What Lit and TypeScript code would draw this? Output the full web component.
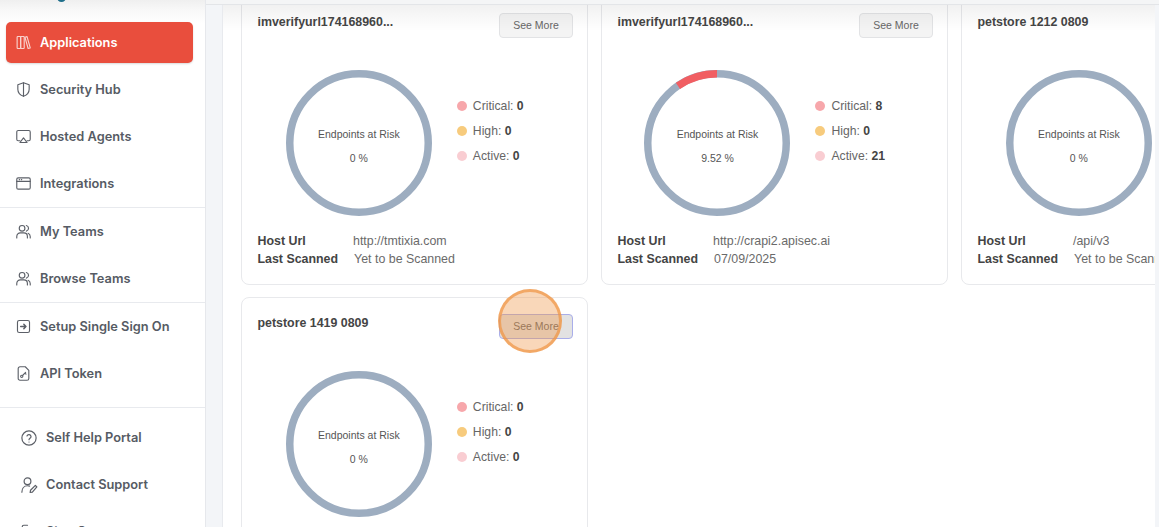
import { LitElement, html, css, svg } from "lit";
import { customElement } from "lit/decorators.js";

const I = (body: unknown, size = 17) => html`<svg class="ic" width=${size} height=${size} viewBox="0 0 24 24" fill="none" stroke="currentColor" stroke-width="1.6" stroke-linecap="round" stroke-linejoin="round">${body}</svg>`;

const icons: Record<string, unknown> = {
  books: svg`<rect x="3" y="3.5" width="5" height="17" rx="1"/><rect x="8" y="3.5" width="5" height="17" rx="1"/><path d="M14 4.5l3-.8 4.5 16-3 .8z"/>`,
  shield: svg`<path d="M12 2.500l8 2.800v6.200c0 4.800-3.400 8.300-8 10-4.600-1.700-8-5.200-8-10V5.300z"/><path d="M12 2.500v19"/>`,
  agent: svg`<path d="M7 18H4.500A2 2 0 0 1 2.500 16V5.500a2 2 0 0 1 2-2h15a2 2 0 0 1 2 2V16a2 2 0 0 1-2 2H17"/><path d="M12 14l5 6.500H7z"/>`,
  window: svg`<rect x="2.500" y="4" width="19" height="16" rx="2"/><path d="M2.500 9h19M6 6.500h.5M9 6.500h.5"/>`,
  users: svg`<circle cx="10" cy="7.500" r="4"/><path d="M2.500 21v-2a5 5 0 0 1 5-5h5a5 5 0 0 1 5 5v2"/><path d="M16 3.600a4 4 0 0 1 0 7.800M21.500 21v-2a5 5 0 0 0-3-4.500"/>`,
  sso: svg`<rect x="3.500" y="3.500" width="17" height="17" rx="2.500"/><path d="M8 12h7.500M12.500 9l3 3-3 3" stroke-width="2"/>`,
  token: svg`<path d="M14.500 2.500H7a2.500 2.500 0 0 0-2.500 2.500v14A2.500 2.500 0 0 0 7 21.500h10a2.500 2.500 0 0 0 2.500-2.500V7.500z"/><circle cx="9.500" cy="16" r="1.600"/><path d="M11 14.500l4-4M14 11.500l1.500 1.500"/>`,
  help: svg`<circle cx="12" cy="12" r="9.500"/><path d="M9.300 9.300a2.800 2.800 0 0 1 5.400.9c0 1.800-2.700 2.300-2.700 4"/><path d="M12 17.300h.01"/>`,
  contact: svg`<circle cx="10" cy="7" r="4.500"/><path d="M2.500 21.500c0-5 3-8.500 7.500-8.500 1 0 2 .2 2.800.5"/><path d="M20.500 12.500l2 2-6 7-3 .5.500-3z"/>`,
  signout: svg`<path d="M10 3H5a2 2 0 0 0-2 2v14a2 2 0 0 0 2 2h5M15 8l5 4-5 4M20 12H9"/>`,
};

interface Nav { label: string; icon: string; active?: boolean; }
const group1: Nav[] = [
  { label: "Applications", icon: "books", active: true },
  { label: "Security Hub", icon: "shield" },
  { label: "Hosted Agents", icon: "agent" },
  { label: "Integrations", icon: "window" },
];
const group2: Nav[] = [
  { label: "My Teams", icon: "users" },
  { label: "Browse Teams", icon: "users" },
];
const group3: Nav[] = [
  { label: "Setup Single Sign On", icon: "sso" },
  { label: "API Token", icon: "token" },
];
const group4: Nav[] = [
  { label: "Self Help Portal", icon: "help" },
  { label: "Contact Support", icon: "contact" },
  { label: "Sign Out", icon: "signout" },
];

interface Card {
  title: string; critical: number; high: number; active: number; pct: string; risk: number;
  host: string; scanned: string; more?: boolean; focus?: boolean;
}
const cards: Card[] = [
  { title: "imverifyurl174168960...", critical: 0, high: 0, active: 0, pct: "0 %", risk: 0, host: "http://tmtixia.com", scanned: "Yet to be Scanned", more: true },
  { title: "imverifyurl174168960...", critical: 8, high: 0, active: 21, pct: "9.52 %", risk: 9.52, host: "http://crapi2.apisec.ai", scanned: "07/09/2025", more: true },
  { title: "petstore 1212 0809", critical: 0, high: 0, active: 0, pct: "0 %", risk: 0, host: "/api/v3", scanned: "Yet to be Scanned" },
  { title: "petstore 1419 0809", critical: 0, high: 0, active: 0, pct: "0 %", risk: 0, host: "http://tmtixia.com", scanned: "Yet to be Scanned", more: true, focus: true },
];

@customElement("app-root")
export class AppRoot extends LitElement {
  static styles = css`
    :host { display: block; width: 1159px; height: 527px; overflow: hidden; font-family: "Liberation Sans", Arial, sans-serif; background: #fff; }
    * { box-sizing: border-box; }
    .app { display: flex; height: 527px; }
    .side { position: relative; flex: none; width: 206px; height: 527px; overflow: hidden; border-right: 1px solid #e6e8ec; padding-top: 18px; background: linear-gradient(#efefef 0, #f8f8f8 10px, #fff 24px); }
    .logo { position: absolute; left: 57px; top: -4px; width: 9px; height: 6px; border-radius: 0 0 5px 5px; background: #1f6f8b; }
    .group { display: flex; flex-direction: column; }
    .sep { border-bottom: 1px solid #e8eaee; }
    .item { display: flex; align-items: center; gap: 8px; height: 47px; padding-left: 15px; color: #565b64; font-family: Inter, "Liberation Sans", sans-serif; font-size: 12.8px; font-weight: 600; white-space: nowrap; }
    .item.active { height: 41px; margin: 4px 12px 3px 6px; padding-left: 9px; border-radius: 5px; background: #e94e3d; color: #fff; box-shadow: 0 1px 2px rgba(0,0,0,.15); }
    .g3 { padding-bottom: 10px; }
    .g4 { padding-top: 6px; }
    .g4 .item { padding-left: 20px; gap: 8px; }
    .ic { flex: none; color: #5c6068; }
    .item.active .ic { color: #fff; opacity: .75; }
    .main { flex: 1; display: flex; flex-direction: column; min-width: 0; background: #f3f5f8; }
    .top { flex: none; height: 5px; background: #f4f5f6; border-bottom: 1px solid #e3e5e8; }
    .body { position: relative; flex: 1; margin: 0 4px 0 16px; padding-left: 18px; overflow: hidden; background: #fff; border-left: 1px solid #e8eaee; }
    .body::after { content: ""; position: absolute; inset: 0 0 auto 0; height: 26px; background: linear-gradient(rgba(0,0,0,.055), rgba(0,0,0,0)); pointer-events: none; }
    .grid { display: grid; grid-template-columns: repeat(3, 347px); column-gap: 13px; row-gap: 12px; margin-top: -9px; width: 1200px; }
    .card { height: 289px; padding: 17px 14px 0 15.500px; border: 1px solid #e8e9ec; border-radius: 8px; background: #fff; display: flex; flex-direction: column; }
    .head { display: flex; justify-content: space-between; align-items: flex-start; height: 56px; }
    .title { font-size: 12.4px; font-weight: 700; color: #454545; line-height: 16px; white-space: nowrap; }
    .btn { position: relative; width: 74px; height: 25px; margin-top: -1px; padding-bottom: 2px; border: 1px solid #e2e3e5; border-radius: 4px; background: #f4f4f4; color: #666; font-size: 10.5px; display: flex; align-items: center; justify-content: center; }
    .btn.focus { background: #e2e2e2; border-color: #a9aeea; }
    .pulse { position: absolute; left: -2px; top: -26px; width: 64px; height: 64px; border-radius: 50%; background: rgba(240,150,70,.38); border: 3px solid rgba(240,150,70,.72); }
    .chart { display: flex; align-items: center; justify-content: center; gap: 25px; padding-right: 21px; height: 146px; flex: none; }
    .ring { position: relative; flex: none; width: 146px; height: 146px; }
    .ring svg { display: block; }
    .center { position: absolute; inset: 0; display: flex; flex-direction: column; align-items: center; justify-content: center; gap: 12px; padding-top: 6px; color: #555; font-size: 10.5px; line-height: 12px; }
    .legend { display: flex; flex-direction: column; gap: 7px; margin-top: -24px; }
    .row { display: flex; align-items: center; gap: 6px; height: 18px; font-size: 12.2px; color: #666; white-space: nowrap; }
    .row b { color: #444; }
    .dot { width: 10px; height: 10px; border-radius: 50%; flex: none; }
    .meta { margin-top: 16px; font-size: 12.4px; line-height: 18px; color: #6a6a6a; white-space: nowrap; }
    .meta b { color: #444; }
    .m1 { display: grid; grid-template-columns: 95.500px auto; }
    .m2 { display: flex; gap: 16px; }
  `;

  private nav(n: Nav, size = 17) {
    return html`<div class="item ${n.active ? "active" : ""}">${I(icons[n.icon], size)}<span>${n.label}</span></div>`;
  }

  private ring(c: Card) {
    const r = 69.25, len = 2 * Math.PI * r, seg = (len * c.risk) / 100;
    return html`<div class="ring">
      <svg width="146" height="146" viewBox="0 0 146 146">
        <circle cx="73" cy="73" r=${r} fill="none" stroke="#9dadc0" stroke-width="7.500"/>
        ${c.risk > 0 ? svg`<circle cx="73" cy="73" r=${r} fill="none" stroke="#f15e62" stroke-width="7.500" stroke-dasharray="${seg} ${len - seg}" transform="rotate(-90 73 73) scale(1 -1) translate(0 -146)"/>` : ""}
      </svg>
      <div class="center"><span>Endpoints at Risk</span><span>${c.pct}</span></div>
    </div>`;
  }

  private card(c: Card) {
    return html`<div class="card">
      <div class="head">
        <div class="title">${c.title}</div>
        ${c.more ? html`<div class="btn ${c.focus ? "focus" : ""}">See More${c.focus ? html`<span class="pulse"></span>` : ""}</div>` : ""}
      </div>
      <div class="chart">
        ${this.ring(c)}
        <div class="legend">
          <div class="row"><span class="dot" style="background:#f7a7ab"></span><span>Critical: <b>${c.critical}</b></span></div>
          <div class="row"><span class="dot" style="background:#f7cb7d"></span><span>High: <b>${c.high}</b></span></div>
          <div class="row"><span class="dot" style="background:#f9cdd2"></span><span>Active: <b>${c.active}</b></span></div>
        </div>
      </div>
      <div class="meta">
        <div class="m1"><b>Host Url</b><span>${c.host}</span></div>
        <div class="m2"><b>Last Scanned</b><span>${c.scanned}</span></div>
      </div>
    </div>`;
  }

  render() {
    return html`<div class="app">
      <aside class="side">
        <div class="logo"></div>
        <div class="group sep">${group1.map((n) => this.nav(n))}</div>
        <div class="group sep">${group2.map((n) => this.nav(n))}</div>
        <div class="group g3 sep">${group3.map((n) => this.nav(n))}</div>
        <div class="group g4">${group4.map((n) => this.nav(n, 18))}</div>
      </aside>
      <main class="main">
        <div class="top"></div>
        <div class="body"><div class="grid">${cards.map((c) => this.card(c))}</div></div>
      </main>
    </div>`;
  }
}
